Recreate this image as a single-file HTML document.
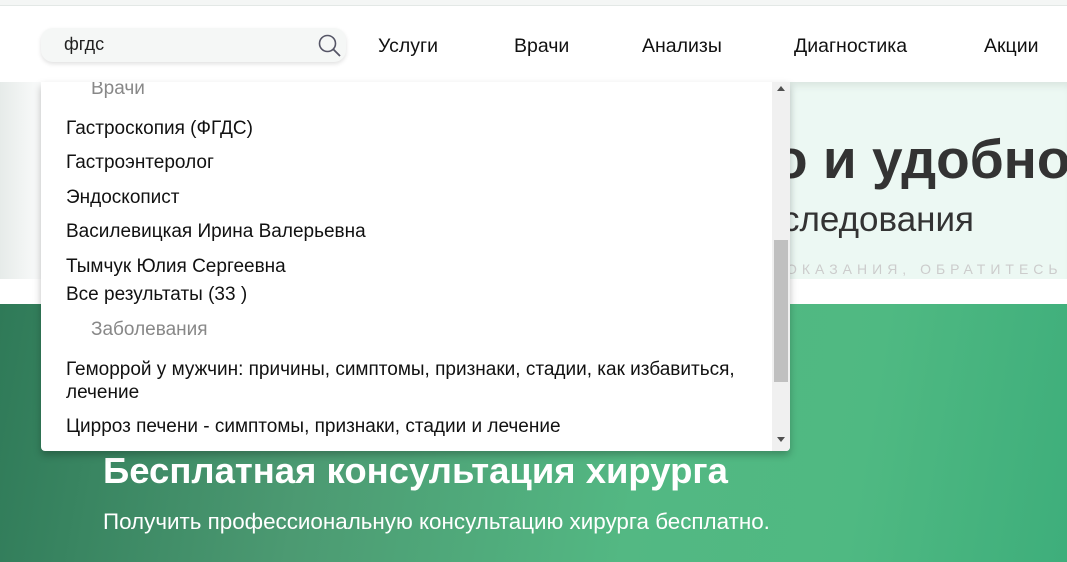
<!DOCTYPE html>
<html><head><meta charset="utf-8"><style>
*{margin:0;padding:0;box-sizing:border-box}
body{width:1067px;height:562px;overflow:hidden;position:relative;font-family:"Liberation Sans","DejaVu Sans",sans-serif;background:#fff}
.top{position:absolute;left:0;top:0;width:1067px;height:6px;background:#f4f6f5;border-bottom:1px solid #e3e8e6}
.header{position:absolute;left:0;top:7px;width:1067px;height:75px;background:#fff}
.search{position:absolute;left:41px;top:28px;width:305px;height:34px;border-radius:12px;background:#f5f7f6;box-shadow:0 2px 4px rgba(0,0,0,.12);font-size:18px;color:#222;padding:6px 0 0 23px}
.nav{position:absolute;top:35px;font-size:19.5px;color:#111;white-space:nowrap}
.hero{position:absolute;left:0;top:82px;width:1067px;height:197px;background:#ecf8f3;box-shadow:inset 0 8px 8px -4px rgba(0,0,0,.08)}
.heroleft{position:absolute;left:0;top:82px;width:41px;height:222px;background:linear-gradient(90deg,#e6ebe9,#fafbfb)}
.h1{position:absolute;left:774px;top:127px;font-size:55px;font-weight:bold;color:#333;white-space:nowrap}
.h2{position:absolute;left:782px;top:200px;font-size:35px;color:#333;white-space:nowrap}
.h3{position:absolute;left:786px;top:261px;font-size:14px;letter-spacing:5px;color:#ccc;white-space:nowrap}
.whiteband{position:absolute;left:0;top:279px;width:1067px;height:25px;background:#fff}
.green{position:absolute;left:0;top:304px;width:1067px;height:258px;background:linear-gradient(100deg,#2f7a58 0%,#4c9a72 30%,#53b883 60%,#4fb982 80%,#3eae7b 100%)}
.g1{position:absolute;left:103px;top:450px;font-size:36.5px;font-weight:bold;color:#fff;white-space:nowrap}
.g2{position:absolute;left:103px;top:509px;font-size:22.4px;color:#fff;white-space:nowrap}
.dd{position:absolute;left:41px;top:82px;width:749px;height:369px;background:#fff;box-shadow:0 4px 8px rgba(0,0,0,.25);border-radius:0 0 4px 4px;overflow:hidden}
.it{position:absolute;left:25px;font-size:19px;color:#111;white-space:nowrap}
.cat{position:absolute;left:50px;font-size:19px;color:#888}
.sb{position:absolute;left:731px;top:0;width:18px;height:369px;background:#f0f0f0}
.thumb{position:absolute;left:2px;top:158px;width:14px;height:142px;background:#c0c0c0}
</style></head><body>
<div class="top"></div>
<div class="header"></div>
<div class="search">фгдс
<svg style="position:absolute;left:276px;top:5px" width="26" height="26" viewBox="0 0 26 26"><circle cx="10.5" cy="10.5" r="8" fill="none" stroke="#556" stroke-width="1.6"/><line x1="16.5" y1="16.5" x2="23" y2="23" stroke="#556" stroke-width="1.8"/></svg></div>
<div class="nav" style="left:378px">Услуги</div>
<div class="nav" style="left:514px">Врачи</div>
<div class="nav" style="left:642px">Анализы</div>
<div class="nav" style="left:794px">Диагностика</div>
<div class="nav" style="left:984px">Акции</div>
<div class="hero"></div>
<div class="heroleft"></div>
<div class="h1">о и удобно</div>
<div class="h2">следования</div>
<div class="h3">ОКАЗАНИЯ, ОБРАТИТЕСЬ</div>
<div class="whiteband"></div>
<div class="green"></div>
<div class="g1">Бесплатная консультация хирурга</div>
<div class="g2">Получить профессиональную консультацию хирурга бесплатно.</div>
<div class="dd">
<div class="cat" style="top:-4px">Врачи</div>
<div class="it" style="top:36px">Гастроскопия (ФГДС)</div>
<div class="it" style="top:70px">Гастроэнтеролог</div>
<div class="it" style="top:105px">Эндоскопист</div>
<div class="it" style="top:139px">Василевицкая Ирина Валерьевна</div>
<div class="it" style="top:174px">Тымчук Юлия Сергеевна</div>
<div class="it" style="top:202px">Все результаты (33 )</div>
<div class="cat" style="top:237px">Заболевания</div>
<div class="it" style="top:277px">Геморрой у мужчин: причины, симптомы, признаки, стадии, как избавиться,</div>
<div class="it" style="top:300px">лечение</div>
<div class="it" style="top:334px">Цирроз печени - симптомы, признаки, стадии и лечение</div>
<div class="sb"><div style="position:absolute;left:5px;top:4px;width:0;height:0;border-left:4px solid transparent;border-right:4px solid transparent;border-bottom:5px solid #505050"></div><div class="thumb"></div><div style="position:absolute;left:5px;top:355px;width:0;height:0;border-left:4px solid transparent;border-right:4px solid transparent;border-top:5px solid #505050"></div></div>
</div>
</body></html>
